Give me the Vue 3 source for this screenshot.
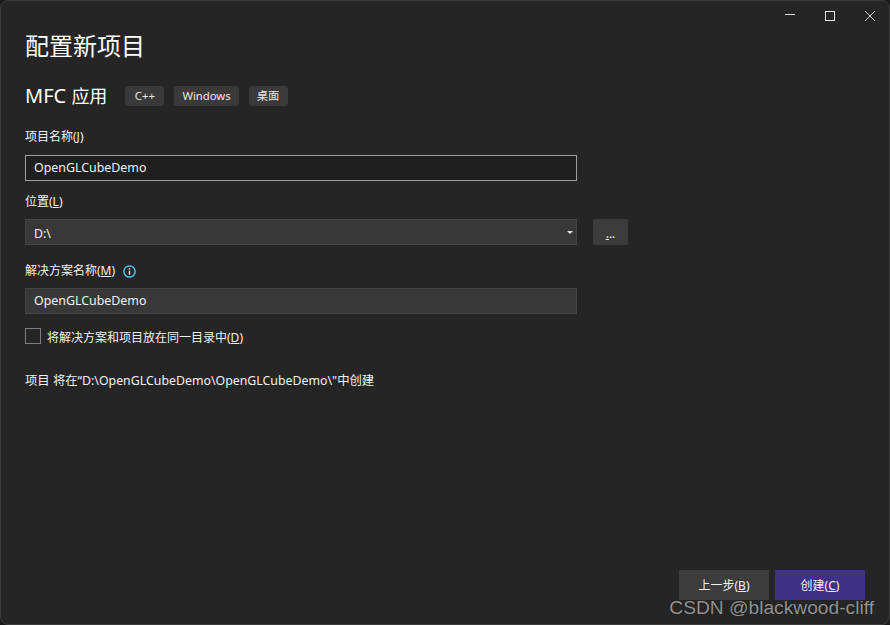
<script setup>
const tags = ['C++', 'Windows', '桌面']
</script>

<template>
  <div class="window">
    <div class="titlebar">
      <button class="winbtn">
        <svg width="12" height="12" viewBox="0 0 12 12"><path d="M1 4.5H11" stroke="#e0e0e0" fill="none" /></svg>
      </button>
      <button class="winbtn">
        <svg width="12" height="12" viewBox="0 0 12 12"><rect x="1.5" y="1.5" width="9" height="9" stroke="#e0e0e0" fill="none" /></svg>
      </button>
      <button class="winbtn">
        <svg width="12" height="12" viewBox="0 0 12 12"><path d="M1 1L11 11M11 1L1 11" stroke="#d0d0d0" fill="none" /></svg>
      </button>
    </div>

    <h1 class="title">配置新项目</h1>

    <div class="template">
      <span class="name">MFC <span class="cjk">应用</span></span>
      <span v-for="t in tags" :key="t" class="tag">{{ t }}</span>
    </div>

    <label class="label first">项目名称(<u>J</u>)</label>
    <div class="input focus">OpenGLCubeDemo</div>

    <label class="label loc">位置(<u>L</u>)</label>
    <div class="row">
      <div class="input filled combo">
        <span>D:\</span>
        <i class="arrow"></i>
      </div>
      <button class="browse"><u>.</u>..</button>
    </div>

    <label class="label sol">
      解决方案名称(<u>M</u>)
      <svg class="info" width="13" height="13" viewBox="0 0 13 13">
        <circle cx="6.5" cy="6.5" r="5.6" stroke="#4fc1e9" stroke-width="1.5" fill="none" />
        <rect x="5.8" y="5.6" width="1.4" height="4" fill="#e8e8e8" />
        <rect x="5.8" y="3.2" width="1.4" height="1.4" fill="#e8e8e8" />
      </svg>
    </label>
    <div class="input filled tight">OpenGLCubeDemo</div>

    <div class="check">
      <span class="box"></span>
      <span class="check-text">将解决方案和项目放在同一目录中(<u>D</u>)</span>
    </div>

    <p class="path">项目 将在“D:\OpenGLCubeDemo\OpenGLCubeDemo\"中创建</p>

    <div class="footer">
      <button class="btn">上一步(<u>B</u>)</button>
      <button class="btn primary">创建(<u>C</u>)</button>
    </div>

    <div class="watermark">CSDN @blackwood-cliff</div>
  </div>
</template>

<style>
html, body {
  margin: 0;
  background: #1a1a1a;
}
</style>

<style scoped>
.window {
  position: relative;
  box-sizing: border-box;
  width: 890px;
  height: 625px;
  display: flex;
  flex-direction: column;
  padding: 0 25px 24px 25px;
  background: #252525;
  border: 1px solid #3c3c3c;
  border-radius: 8px;
  color: #f1f1f1;
  font-family: "Noto Sans", "Noto Sans CJK SC", sans-serif;
  font-size: 12px;
  overflow: hidden;
}

.titlebar {
  display: flex;
  justify-content: flex-end;
  margin-right: -26px;
  height: 30px;
}

.winbtn {
  width: 40px;
  height: 30px;
  padding: 0;
  border: none;
  background: none;
  display: flex;
  align-items: center;
  justify-content: center;
}

.title {
  margin: 1px 0 0 -1px;
  font-size: 24px;
  line-height: 28px;
  font-weight: 400;
  color: #fff;
}

.template {
  display: flex;
  align-items: center;
  margin-top: 21px;
  margin-left: -1px;
  height: 30px;
}

.name {
  font-size: 20px;
  color: #fff;
  margin-top: -2px;
  margin-right: 18px;
}

.cjk {
  font-size: 18px;
}

.tag {
  box-sizing: border-box;
  min-width: 39px;
  text-align: center;
  background: #3a3a3a;
  border-radius: 3px;
  height: 20px;
  line-height: 20px;
  padding: 0 8px;
  margin-right: 10px;
  font-size: 11.3px;
  color: #e8e8e8;
}

.label {
  display: block;
  line-height: 20px;
  height: 20px;
  margin-left: -1px;
}

.first { margin-top: 16px; }
.loc { margin-top: 11px; }
.sol { margin-top: 16px; display: flex; align-items: center; }

.info { margin-left: 8px; }

.input {
  box-sizing: border-box;
  width: 552px;
  height: 26px;
  line-height: 23px;
  padding: 0 8px;
  margin-left: -1px;
  margin-top: 8px;
  font-size: 12.4px;
  color: #f1f1f1;
  border: 1px solid #434343;
}

.focus {
  background: #1f1f1f;
  border-color: #a0a0a0;
}

.filled {
  background: #383838;
}

.tight {
  margin-top: 7px;
}

.row {
  display: flex;
  align-items: flex-end;
  gap: 16px;
  margin-top: 7px;
}

.combo {
  display: flex;
  align-items: center;
  justify-content: space-between;
  margin-top: 0;
  padding-top: 2px;
}

.arrow {
  width: 0;
  height: 0;
  margin-top: -2px;
  margin-right: -5px;
  border-left: 3.5px solid transparent;
  border-right: 3.5px solid transparent;
  border-top: 3.5px solid #e6e6e6;
}

.browse {
  width: 35px;
  height: 26px;
  padding: 0;
  border: none;
  background: #3c3c3c;
  color: #f1f1f1;
  font-family: inherit;
  font-size: 12px;
  line-height: 30px;
}

.check {
  display: flex;
  align-items: center;
  gap: 6px;
  margin-top: 14px;
  margin-left: -1px;
  height: 16px;
}

.check-text {
  margin-top: 2px;
}

.box {
  box-sizing: border-box;
  width: 16px;
  height: 16px;
  border: 1px solid #7d7d7d;
}

.path {
  margin: 27px 0 0 -1px;
  line-height: 20px;
  font-size: 12.35px;
}

.footer {
  margin-top: auto;
  margin-right: -1px;
  display: flex;
  justify-content: flex-end;
  gap: 6px;
}

.btn {
  width: 90px;
  height: 30px;
  padding: 0;
  border: none;
  background: #3c3c3c;
  color: #f1f1f1;
  font-family: inherit;
  font-size: 12px;
}

.primary {
  background: #3f3185;
}

.watermark {
  position: absolute;
  right: 15px;
  bottom: 5px;
  font-family: "Liberation Sans", Arial, sans-serif;
  font-size: 19.2px;
  color: rgba(190, 190, 190, 0.75);
  text-shadow: 0 0 1px rgba(0, 0, 0, 0.6);
  white-space: nowrap;
}
</style>
